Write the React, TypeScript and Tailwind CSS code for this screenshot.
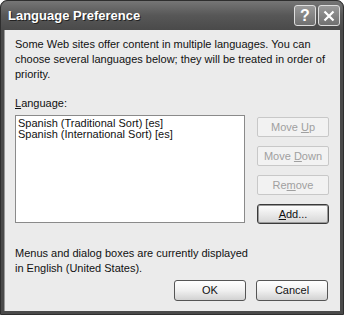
export default function App() {
  const font = { fontFamily: '"Liberation Sans", Arial, sans-serif' };
  return (
    <div className="w-[344px] h-[315px] bg-white" style={font}>
      <div className="w-[344px] h-[315px] rounded-t-[7px] bg-[#4a4a4a] flex flex-col px-[3px] pb-[3px] border border-[#2e2e2e]">
        {/* Title bar */}
        <div className="h-[29px] shrink-0 flex items-center justify-between pl-[5px] pr-[1px] bg-gradient-to-b from-[#767676] via-[#575757] to-[#4a4a4a] -mx-[3px] rounded-t-[7px]">
          <span className="text-white font-bold text-[13px] ml-[2px]" style={{ textShadow: "1px 1px 0 #222" }}>
            Language Preference
          </span>
          <div className="flex gap-[2px] mr-[2px]">
            <div className="w-[22px] h-[21px] rounded-[3px] border border-[#ddd] bg-gradient-to-b from-[#9a9a9a] to-[#707070] flex items-center justify-center text-white font-bold text-[16px]">
              ?
            </div>
            <div className="w-[22px] h-[21px] rounded-[3px] border border-[#ddd] bg-gradient-to-b from-[#9a9a9a] to-[#707070] flex items-center justify-center">
              <svg width="12" height="12" viewBox="0 0 12 12">
                <path d="M1.5 1.5 L10.5 10.5 M10.5 1.5 L1.5 10.5" stroke="white" strokeWidth="2.2" />
              </svg>
            </div>
          </div>
        </div>
        {/* Body */}
        <div className="flex-1 bg-[#ebebeb] border-l border-[#9a9a9a] px-[10px] pt-[7px] text-[11px] text-[#111] leading-[15px]">
          <p className="whitespace-nowrap">
            Some Web sites offer content in multiple languages. You can
            <br />
            choose several languages below; they will be treated in order of
            <br />
            priority.
          </p>
          <p className="mt-[14px]">
            <span className="underline">L</span>anguage:
          </p>
          <div className="flex gap-[12px] mt-[4px]">
            <div className="w-[230px] h-[108px] bg-white border border-[#8a8a8a] px-[2px] pt-[2px] leading-[11px]">
              <div>Spanish (Traditional Sort) [es]</div>
              <div>Spanish (International Sort) [es]</div>
            </div>
            <div className="flex flex-col gap-[9px] pt-[2px]">
              {[
                ["Move\u00a0", "U", "p"],
                ["Move\u00a0", "D", "own"],
                ["Re", "m", "ove"],
              ].map(([a, u, b]) => (
                <div key={a + u} className="w-[72px] h-[20px] border border-[#c8c8c8] rounded-[2px] bg-[#f2f2f2] flex items-center justify-center text-[#a0a0a0]">
                  <span>
                    {a}
                    <span className="underline">{u}</span>
                    {b}
                  </span>
                </div>
              ))}
              <div className="w-[72px] h-[20px] border border-[#3a3a3a] rounded-[3px] bg-gradient-to-b from-white to-[#d6d6d6] flex items-center justify-center text-[#111] shadow-[inset_0_0_0_1px_#9a9a9a]">
                <span>
                  <span className="underline">A</span>dd...
                </span>
              </div>
            </div>
          </div>
          <p className="mt-[22px]">
            Menus and dialog boxes are currently displayed
            <br />
            in English (United States).
          </p>
          <div className="flex justify-end gap-[10px] mt-[4px] pr-[2px]">
            {["OK", "Cancel"].map((t) => (
              <div key={t} className="w-[72px] h-[21px] border border-[#555] rounded-[3px] bg-gradient-to-b from-white via-[#f0f0f0] to-[#d2d2d2] flex items-center justify-center text-[#111]">
                {t}
              </div>
            ))}
          </div>
        </div>
      </div>
    </div>
  );
}
